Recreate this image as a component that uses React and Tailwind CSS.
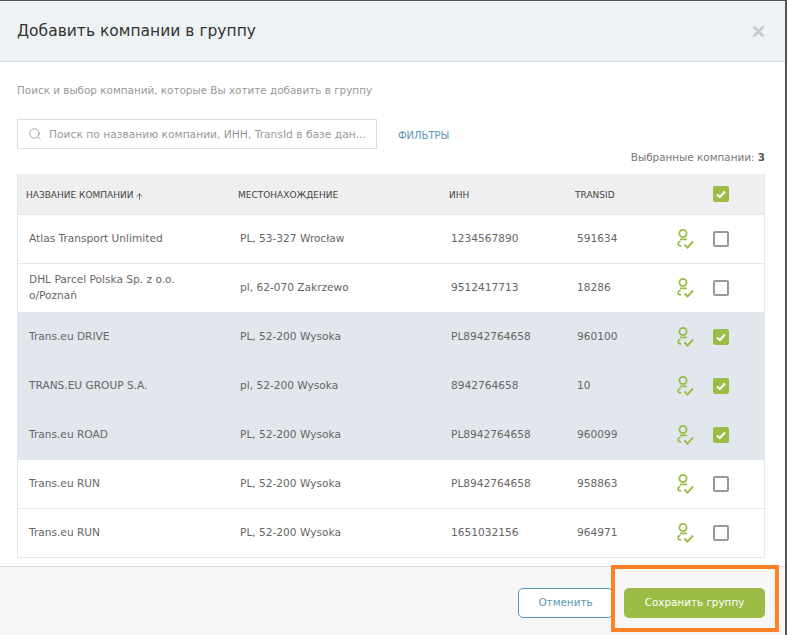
import React from 'react';
import { Search, ArrowUp, X } from 'lucide-react';

const COMPANIES = [
    { name: 'Atlas Transport Unlimited', place: 'PL, 53-327 Wrocław', inn: '1234567890', transId: '591634', selected: false },
    { name: 'DHL Parcel Polska Sp. z o.o. o/Poznań', place: 'pl, 62-070 Zakrzewo', inn: '9512417713', transId: '18286', selected: false },
    { name: 'Trans.eu DRIVE', place: 'PL, 52-200 Wysoka', inn: 'PL8942764658', transId: '960100', selected: true },
    { name: 'TRANS.EU GROUP S.A.', place: 'pl, 52-200 Wysoka', inn: '8942764658', transId: '10', selected: true },
    { name: 'Trans.eu ROAD', place: 'PL, 52-200 Wysoka', inn: 'PL8942764658', transId: '960099', selected: true },
    { name: 'Trans.eu RUN', place: 'PL, 52-200 Wysoka', inn: 'PL8942764658', transId: '958863', selected: false },
    { name: 'Trans.eu RUN', place: 'PL, 52-200 Wysoka', inn: '1651032156', transId: '964971', selected: false },
];

const GRID = 'grid grid-cols-[212px_211px_126px_96px_1fr] items-center';

const Checkbox = ({ checked }) =>
    checked ? (
        <div className="w-4 h-4 rounded-[2px] bg-[#9bbc45] flex items-center justify-center">
            <svg width="12" height="12" viewBox="0 0 12 12" fill="none" stroke="white" strokeWidth="2">
                <path d="M2 6.5L4.8 9L10 3.5" />
            </svg>
        </div>
    ) : (
        <div className="w-4 h-4 rounded-[2px] border-2 border-[#999] bg-white" />
    );

const PersonCheck = () => (
    <svg width="18" height="20" viewBox="0 0 18 20" fill="none" stroke="#9bbc45" strokeWidth="1.7">
        <circle cx="6" cy="4.5" r="3.6" />
        <path d="M3 10.4H10" />
        <path d="M3.5 12.2C0.5 13 0 16.5 4 17.2" />
        <path d="M7.5 15.5L10.5 18.6L16 12.5" strokeWidth="1.9" />
    </svg>
);

const Row = ({ name, place, inn, transId, selected }) => (
    <div className={`${GRID} h-[49px] text-[10.6px] text-[#666] border-b ${selected ? 'bg-[#e1e7ed] border-transparent' : 'border-[#e2e8ee]'}`}>
        <div className="pl-[11px] pr-4 leading-[15.9px]">{name}</div>
        <div className="pl-[10px]">{place}</div>
        <div className="pl-[10px]">{inn}</div>
        <div className="pl-[10px]">{transId}</div>
        <div className="flex items-center gap-[18px] pl-[14px]">
            <PersonCheck />
            <Checkbox checked={selected} />
        </div>
    </div>
);

export default function App() {
    return (
        <div className="w-[787px] h-[635px] bg-[#555] pr-[2px] pt-[1px] relative overflow-hidden font-['DejaVu_Sans',sans-serif]">
            <div className="h-full bg-white flex flex-col">
                {/* Header */}
                <div className="h-[61px] shrink-0 bg-[#edf2f5] border-b border-[#cfdde8] flex items-center justify-between pl-[17px] pr-[18px]">
                    <h1 className="text-[15.5px] text-[#333] pt-px">Добавить компании в группу</h1>
                    <X size={17} strokeWidth={3.5} className="text-[#c8c8c8]" />
                </div>

                {/* Body */}
                <div className="flex-1 pl-[17px] pr-5 flex flex-col">
                    <p className="text-[10.4px] text-[#999] mt-5 h-4 leading-4">Поиск и выбор компаний, которые Вы хотите добавить в группу</p>

                    <div className="flex items-center mt-[21px]">
                        <div className="w-[360px] h-[30px] border border-[#ddd] flex items-center pl-[10px] text-[10.7px] text-[#999]">
                            <Search size={14} strokeWidth={1.25} className="text-[#888] mr-[7px] shrink-0" />
                            <span className="whitespace-nowrap pt-[2px]">Поиск по названию компании, ИНН, TransId в базе дан...</span>
                        </div>
                        <a className="ml-[21px] pt-[2px] text-[10px] text-[#5b94b8]">ФИЛЬТРЫ</a>
                    </div>

                    <div className="text-[10.4px] text-[#777] text-right mt-px h-[14px] leading-[14px]">
                        Выбранные компании: <b className="text-[#555]">3</b>
                    </div>

                    {/* Table */}
                    <div className="mt-[10px] border-x border-[#e2e8ee]">
                        <div className={`${GRID} h-[41px] bg-[#efefef] border-b border-[#e2e8ee] text-[9px] text-[#444]`}>
                            <div className="pl-2 pt-[4px] flex items-center gap-[2px]">
                                НАЗВАНИЕ КОМПАНИИ <ArrowUp size={9} />
                            </div>
                            <div className="pl-2 pt-[4px]">МЕСТОНАХОЖДЕНИЕ</div>
                            <div className="pl-2 pt-[4px]">ИНН</div>
                            <div className="pl-2 pt-[4px]">TRANSID</div>
                            <div className="flex pl-[50px]">
                                <Checkbox checked />
                            </div>
                        </div>
                        {COMPANIES.map((c, i) => (
                            <Row key={i} {...c} />
                        ))}
                    </div>
                </div>

                {/* Footer */}
                <div className="h-[69px] shrink-0 bg-[#f7f7f7] border-t border-[#ddd] flex items-center justify-end gap-[11px] pr-5 pt-[3px]">
                    <button className="w-[95px] h-[30px] rounded-[5px] border border-[#5b94b8] bg-white text-[10.4px] text-[#5b94b8]">Отменить</button>
                    <button className="w-[141px] h-[30px] rounded-[5px] bg-[#9bbc45] text-[10.4px] text-white">Сохранить группу</button>
                </div>
            </div>

            {/* Orange highlight round the save button */}
            <div className="absolute left-[611px] top-[565px] w-[168px] h-[67px] border-[4px] border-[#ff8124] pointer-events-none" />
        </div>
    );
}
